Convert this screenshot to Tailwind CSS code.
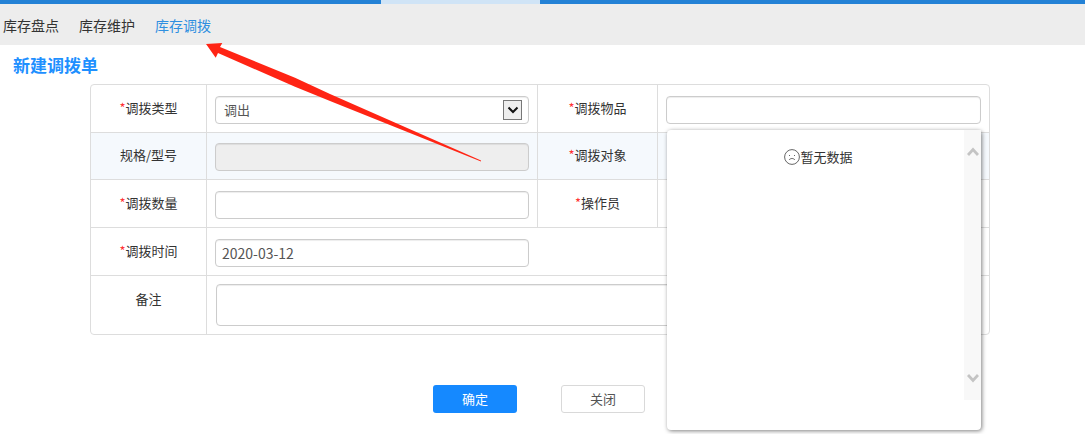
<!DOCTYPE html>
<html lang="zh-CN">
  <head>
    <meta charset="UTF-8" />
    <title>新建调拨单</title>
    <script src="https://cdn.jsdelivr.net/npm/@tailwindcss/browser@4"></script>
  </head>
  <body class="bg-white overflow-hidden font-['Noto_Sans_CJK_SC','Noto_Sans',sans-serif] text-[13px] text-[#333]">
    <div class="relative h-[434px] w-[1085px] overflow-hidden">
      <!-- top strip -->
      <div class="flex h-1 bg-[#2482d6]">
        <div class="w-[381px]"></div>
        <div class="w-[159px] bg-[#d0e4f6]"></div>
      </div>

      <!-- tabs -->
      <nav class="flex h-[41px] items-center gap-5 bg-[#ededed] pl-[3px] text-sm">
        <a class="leading-5">库存盘点</a>
        <a class="leading-5">库存维护</a>
        <a class="leading-5 text-[#2f8fe0]">库存调拨</a>
      </nav>

      <h1 class="pl-[13px] pt-[9px] text-[17px] leading-[22px] font-bold text-[#1e90ff]">新建调拨单</h1>

      <!-- form table -->
      <div class="mt-2 ml-[90px] w-[900px] rounded-[4px] border border-[#ddd]">
        <div class="flex h-12 border-b border-[#ddd]">
          <div class="flex w-[116px] shrink-0 items-center justify-center border-r border-[#ddd] pb-[2px]"><span class="text-[#f33]">*</span>调拨类型</div>
          <div class="relative flex w-[331px] shrink-0 items-center border-r border-[#ddd] pt-[3px] pl-2">
            <select class="h-7 w-[314px] appearance-none rounded-[4px] border border-[#ccc] bg-white pl-2 text-[13px] text-[#555] shadow-[inset_0_1px_1px_rgba(0,0,0,0.075)]"><option>调出</option></select>
            <span class="pointer-events-none absolute top-[15px] left-[296px] flex h-[20px] w-[19px] items-center justify-center border border-[#777] bg-[#eee]">
              <svg class="h-3 w-3" viewBox="0 0 12 12" fill="none" stroke="#111" stroke-width="2"><path d="M1.500 3.500 6 8l4.500-4.500" /></svg>
            </span>
          </div>
          <div class="flex w-[120px] shrink-0 items-center justify-center border-r border-[#ddd] pb-[2px]"><span class="text-[#f33]">*</span>调拨物品</div>
          <div class="flex flex-1 items-center pt-[3px] pl-2"><input class="h-7 w-[315px] rounded-[4px] border border-[#ccc] bg-white shadow-[inset_0_1px_1px_rgba(0,0,0,0.075)]" /></div>
        </div>

        <div class="flex h-[47px] border-b border-[#ddd] bg-[#f5f9fd]">
          <div class="flex w-[116px] shrink-0 items-center justify-center border-r border-[#ddd] pb-[2px]">规格/型号</div>
          <div class="flex w-[331px] shrink-0 items-center border-r border-[#ddd] pt-[2px] pl-2"><input disabled class="h-7 w-[314px] rounded-[4px] border border-[#ccc] bg-[#eee] shadow-[inset_0_1px_1px_rgba(0,0,0,0.075)]" /></div>
          <div class="flex w-[120px] shrink-0 items-center justify-center border-r border-[#ddd] pb-[2px]"><span class="text-[#f33]">*</span>调拨对象</div>
          <div class="flex-1"></div>
        </div>

        <div class="flex h-12 border-b border-[#ddd]">
          <div class="flex w-[116px] shrink-0 items-center justify-center border-r border-[#ddd] pb-[2px]"><span class="text-[#f33]">*</span>调拨数量</div>
          <div class="flex w-[331px] shrink-0 items-center border-r border-[#ddd] pt-[3px] pl-2"><input class="h-7 w-[314px] rounded-[4px] border border-[#ccc] bg-white shadow-[inset_0_1px_1px_rgba(0,0,0,0.075)]" /></div>
          <div class="flex w-[120px] shrink-0 items-center justify-center border-r border-[#ddd] pb-[2px]"><span class="text-[#f33]">*</span>操作员</div>
          <div class="flex-1"></div>
        </div>

        <div class="flex h-12 border-b border-[#ddd]">
          <div class="flex w-[116px] shrink-0 items-center justify-center border-r border-[#ddd] pb-[2px]"><span class="text-[#f33]">*</span>调拨时间</div>
          <div class="flex flex-1 items-center pt-[3px] pl-2"><input value="2020-03-12" class="h-7 w-[314px] rounded-[4px] border border-[#ccc] bg-white pl-[6px] text-sm text-[#555] shadow-[inset_0_1px_1px_rgba(0,0,0,0.075)]" /></div>
        </div>

        <div class="flex h-[58px]">
          <div class="flex w-[116px] shrink-0 justify-center border-r border-[#ddd] pt-[13px] leading-5">备注</div>
          <div class="flex flex-1 items-start pt-2 pl-[9px]"><textarea class="h-[42px] w-[760px] resize-none rounded-[4px] border border-[#ccc] bg-white shadow-[inset_0_1px_1px_rgba(0,0,0,0.075)]"></textarea></div>
        </div>
      </div>

      <!-- actions -->
      <div class="mt-[50px] ml-[433px] flex gap-11">
        <button class="h-7 w-[84px] rounded-[3px] bg-[#1589ff] text-[13px] text-white">确定</button>
        <button class="h-7 w-[84px] rounded-[3px] border border-[#d9d9d9] bg-white text-[13px] text-[#555]">关闭</button>
      </div>

      <!-- dropdown over the form -->
      <div class="absolute top-[130px] left-[667px] flex h-[300px] w-[314px] rounded-[4px] bg-white shadow-[1px_1px_4px_rgba(0,0,0,0.5)]">
        <div class="flex flex-1 items-start justify-center pt-[17px] pl-[6px]">
          <span class="flex items-center leading-5 text-[#333]">
            <svg class="h-4 w-4" viewBox="0 0 16 16" fill="none" stroke="#555" stroke-width="0.9">
              <circle cx="8" cy="8" r="7.400" />
              <path d="M5 11c.8-1 1.800-1.500 3-1.500s2.200.5 3 1.500" />
              <path d="M5 6.500h1M10 6.500h1" />
            </svg>暂无数据
          </span>
        </div>
        <div class="flex h-[270px] w-[17px] flex-col items-center justify-between bg-[#f8f8f8] py-[17px]">
          <svg class="h-[9px] w-3" viewBox="0 0 12 9" fill="none" stroke="#c4c4c4" stroke-width="2.800"><path d="M1 8l5-5.500L11 8" /></svg>
          <svg class="h-[9px] w-3" viewBox="0 0 12 9" fill="none" stroke="#c4c4c4" stroke-width="2.800"><path d="M1 1l5 5.500L11 1" /></svg>
        </div>
      </div>

      <!-- red annotation arrow -->
      <svg class="pointer-events-none absolute top-0 left-0 h-[434px] w-[1085px]" viewBox="0 0 1085 434">
        <polygon fill="#ff2414" points="206,44 222.300,43 220,47 295,77.700 330,94 481,160.500 481,161.500 330,101 295,86.700 218,53 215.700,57.700" />
      </svg>
    </div>
  </body>
</html>
